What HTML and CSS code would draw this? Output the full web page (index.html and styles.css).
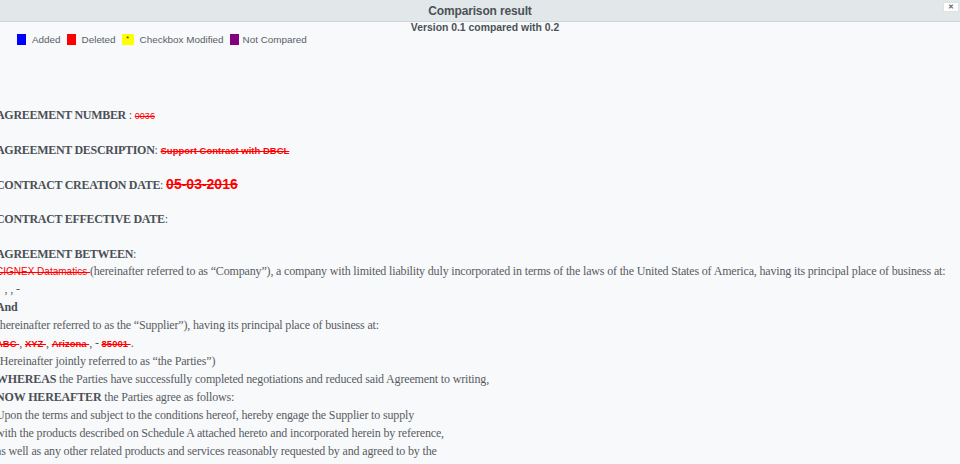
FILE: index.html
```html
<!DOCTYPE html>
<html lang="en">
<head>
    <meta charset="UTF-8">
    <title>Comparison result</title>
    <link rel="stylesheet" href="styles.css">
</head>
<body>
    <div class="dialog">
        <div class="dialog-title">
            <span>Comparison result</span>
            <button class="close-btn">&#x2715;</button>
        </div>
        <div class="dialog-body">
            <div class="version">Version 0.1 compared with 0.2</div>
            <div class="legend">
                <span class="swatch added"></span><span class="legend-label">Added</span>
                <span class="swatch deleted"></span><span class="legend-label">Deleted</span>
                <span class="swatch modified">*</span><span class="legend-label">Checkbox Modified</span>
                <span class="swatch not-compared"></span><span class="legend-label tight">Not Compared</span>
            </div>

            <div class="doc">
                <p class="field"><b>AGREEMENT NUMBER</b> : <del class="del-sm">0036</del></p>
                <p class="field"><b>AGREEMENT DESCRIPTION</b>: <del class="del-md">Support Contract with DBCL</del></p>
                <p class="field"><b>CONTRACT CREATION DATE</b>: <del class="del-lg">05-03-2016 </del></p>
                <p class="field"><b>CONTRACT EFFECTIVE DATE</b>:</p>
                <p class="field between"><b>AGREEMENT BETWEEN</b>:</p>
                <div class="line"><del class="del-reg">CIGNEX Datamatics </del>(hereinafter referred to as “Company”), a company with limited liability duly incorporated in terms of the laws of the United States of America, having its principal place of business at:</div>
                <div class="line">&nbsp;&nbsp;&nbsp;, , -</div>
                <div class="line"><b>And</b></div>
                <div class="line">(hereinafter referred to as the “Supplier”), having its principal place of business at:</div>
                <div class="line"><del class="del-md">ABC </del>, <del class="del-md">XYZ </del>, <del class="del-md">Arizona </del>, - <del class="del-md">85001 </del>.</div>
                <div class="line">(Hereinafter jointly referred to as “the Parties”)</div>
                <div class="line"><b>WHEREAS</b> the Parties have successfully completed negotiations and reduced said Agreement to writing,</div>
                <div class="line"><b>NOW HEREAFTER</b> the Parties agree as follows:</div>
                <div class="line">Upon the terms and subject to the conditions hereof, hereby engage the Supplier to supply</div>
                <div class="line">with the products described on Schedule A attached hereto and incorporated herein by reference,</div>
                <div class="line">as well as any other related products and services reasonably requested by and agreed to by the</div>
            </div>
        </div>
    </div>
</body>
</html>
```

FILE: styles.css
```css
body {
    margin: 0;
    font-family: "Liberation Sans", Arial, sans-serif;
    background: #f8f9fb;
    overflow: hidden;
}

.dialog {
    height: 464px;
    display: flex;
    flex-direction: column;
}

.dialog-title {
    height: 21px;
    background: #e2e8ea;
    border-bottom: 1px solid #cdd5d8;
    display: flex;
    align-items: center;
    justify-content: center;
    position: relative;
    font-size: 12px;
    letter-spacing: -0.15px;
    font-weight: bold;
    color: #4b5157;
}

.close-btn {
    position: absolute;
    right: 1px;
    top: 2px;
    width: 16px;
    height: 10px;
    padding: 0;
    border: 1px solid #dde2e4;
    background: #fff;
    color: #666;
    font-size: 7px;
    line-height: 8px;
    font-weight: bold;
    border-radius: 1px;
}

.dialog-body {
    flex: 1;
}

.version {
    text-align: center;
    padding-left: 10px;
    font-size: 10.4px;
    font-weight: bold;
    color: #4b5157;
    line-height: 11px;
}

.legend {
    display: flex;
    align-items: center;
    height: 11px;
    margin-top: 1px;
    padding-left: 17px;
    font-size: 9.9px;
    color: #5a6066;
}

.swatch {
    display: inline-block;
    width: 9px;
    height: 11px;
    margin-right: 6px;
    font-size: 8px;
    line-height: 9px;
    text-align: center;
    color: #333;
}

.added { background: #0000ff; }
.deleted { background: #ff0000; }
.not-compared { background: #800080; }
.modified {
    background: #ffff00;
    width: 12px;
}

.legend-label {
    margin-right: 6px;
}

.legend-label.tight {
    margin-left: -2px;
}

.doc {
    margin-left: -4px;
    margin-top: 62px;
    font-family: "Liberation Serif", "Times New Roman", serif;
    font-size: 12px;
    letter-spacing: -0.16px;
    color: #585c61;
}

.doc b {
    color: #4b5056;
}

.field {
    margin: 0 0 18.75px;
    line-height: 16px;
}

.field b {
    letter-spacing: -0.3px;
}

.field.between {
    margin-bottom: 0;
}

.line {
    line-height: 18px;
    white-space: nowrap;
}

del {
    color: #ff0000;
    font-family: "Liberation Sans", Arial, sans-serif;
    letter-spacing: 0;
    line-height: 1;
}

.del-sm { font-size: 9px; }
.del-md { font-size: 9.5px; font-weight: bold; }
.del-lg { font-size: 14px; font-weight: bold; }
.del-reg { font-size: 10px; }
```
